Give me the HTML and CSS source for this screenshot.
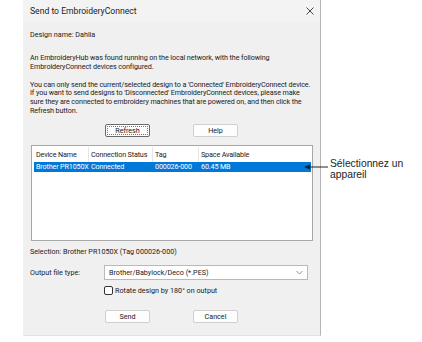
FILE: index.html
```html
<!DOCTYPE html>
<html lang="en">
<head>
    <meta charset="UTF-8">
    <title>Send to EmbroideryConnect</title>
    <link rel="stylesheet" href="styles.css">
</head>
<body>
    <div class="page">
        <div class="dialog">
            <div class="titlebar">
                <span>Send to EmbroideryConnect</span>
                <svg class="close" width="8" height="8" viewBox="0 0 8 8">
                    <path d="M0.5 0.5 L7.5 7.5 M7.5 0.5 L0.5 7.5" stroke="#333" stroke-width="0.9" fill="none"/>
                </svg>
            </div>
            <div class="content">
                <p class="design-name">Design name: Dahlia</p>
                <p class="para first">An EmbroideryHub was found running on the local network, with the following<br>EmbroideryConnect devices configured.</p>
                <p class="para second">You can only send the current/selected design to a 'Connected' EmbroideryConnect device.<br>If you want to send designs to 'Disconnected' EmbroideryConnect devices, please make<br>sure they are connected to embroidery machines that are powered on, and then click the<br>Refresh button.</p>

                <div class="btn-row top-row">
                    <button class="btn focused"><span>Refresh</span></button>
                    <button class="btn">Help</button>
                </div>

                <div class="device-list">
                    <div class="list-row list-head">
                        <span class="col c1">Device Name</span>
                        <span class="col c2">Connection Status</span>
                        <span class="col c3">Tag</span>
                        <span class="col c4">Space Available</span>
                    </div>
                    <div class="list-row selected">
                        <span class="col c1">Brother PR1050X</span>
                        <span class="col c2">Connected</span>
                        <span class="col c3">000026-000</span>
                        <span class="col c4">60.45 MB</span>
                    </div>
                </div>

                <p class="selection">Selection: Brother PR1050X (Tag 000026-000)</p>

                <div class="output-row">
                    <span class="label">Output file type:</span>
                    <div class="dropdown">
                        <span>Brother/Babylock/Deco (*.PES)</span>
                        <svg width="7" height="5" viewBox="0 0 7 5">
                            <path d="M0.5 1 L3.5 4 L6.5 1" stroke="#777" stroke-width="0.8" fill="none"/>
                        </svg>
                    </div>
                </div>

                <label class="check-row">
                    <span class="checkbox"></span>
                    <span>Rotate design by 180° on output</span>
                </label>

                <div class="btn-row bottom-row">
                    <button class="btn">Send</button>
                    <button class="btn">Cancel</button>
                </div>
            </div>
        </div>

        <div class="callout">
            <svg class="arrow" width="24" height="6" viewBox="0 0 24 6">
                <path d="M0 3 L6 0.5 L6 5.5 Z" fill="#222"/>
                <path d="M5 3 L24 3" stroke="#222" stroke-width="1"/>
            </svg>
            <span class="callout-text">Sélectionnez un<br>appareil</span>
        </div>
    </div>
</body>
</html>
```

FILE: styles.css
```css
* {
    margin: 0;
    padding: 0;
    box-sizing: border-box;
}
body {
    background: #fff;
    font-family: Roboto, 'Noto Sans', sans-serif;
    color: #1a1a1a;
}
.page {
    position: relative;
    width: 422px;
    height: 342px;
}
.dialog {
    margin-left: 23px;
    width: 298px;
    height: 336px;
    background: #f0f0f0;
    border-right: 1px solid #b5b5b5;
    border-bottom: 1px solid #e2e2e2;
}
.titlebar {
    height: 22px;
    display: flex;
    align-items: center;
    justify-content: space-between;
    padding: 0 6px 0 7px;
    background: #f3f3f3;
    font-size: 8.6px;
    color: #222;
}
.content {
    padding: 8px 7px 0 7px;
    font-size: 7.2px;
    line-height: 9px;
}
.design-name {
    height: 9px;
}
.para {
    line-height: 8.8px;
    white-space: nowrap;
    letter-spacing: -0.1px;
}
.para.first {
    margin-top: 15px;
}
.para.second {
    margin-top: 9px;
}
.btn-row {
    display: flex;
    gap: 43px;
    padding-left: 75px;
}
.top-row {
    margin-top: 8px;
}
.btn {
    width: 45px;
    height: 13px;
    font-family: inherit;
    font-size: 7.2px;
    color: #1a1a1a;
    background: #fdfdfd;
    border: 1px solid #d0d0d0;
    border-radius: 2px;
    display: flex;
    align-items: center;
    justify-content: center;
}
.btn.focused {
    border-color: #6a6a6a;
    padding: 1px;
}
.btn.focused span {
    display: flex;
    align-items: center;
    justify-content: center;
    width: 100%;
    height: 100%;
    border: 1px dotted #777;
}
.device-list {
    margin: 8px 0 0 1px;
    width: 282px;
    height: 96px;
    background: #fff;
    border: 1px solid #a8a8a8;
    padding: 1px 0 0 2px;
}
.list-row {
    display: flex;
    height: 15px;
    align-items: center;
}
.list-head .col {
    border-right: 1px solid #e5e5e5;
    height: 15px;
    line-height: 15px;
}
.list-row.selected {
    height: 10px;
    background: #0078d7;
    color: #fff;
    margin-right: 1px;
}
.col {
    padding-left: 2px;
    white-space: nowrap;
    overflow: hidden;
    letter-spacing: -0.15px;
}
.c1 { width: 55px; }
.c2 { width: 64px; }
.c3 { width: 46px; }
.c4 { flex: 1; border-right: none !important; }
.selection {
    margin-top: 6px;
    height: 9px;
}
.output-row {
    display: flex;
    align-items: center;
    margin-top: 9px;
}
.output-row .label {
    width: 74px;
}
.dropdown {
    width: 204px;
    height: 15px;
    background: #fff;
    border: 1px solid #b9b9b9;
    display: flex;
    align-items: center;
    justify-content: space-between;
    padding: 0 4px 0 4px;
}
.check-row {
    display: flex;
    align-items: center;
    gap: 2px;
    margin: 6px 0 0 74px;
    height: 9px;
}
.checkbox {
    width: 9px;
    height: 9px;
    border: 1px solid #333;
    border-radius: 2px;
    background: #fff;
}
.bottom-row {
    margin-top: 15px;
}
.callout {
    position: absolute;
    left: 304px;
    top: 158px;
    display: flex;
    align-items: flex-start;
}
.arrow {
    margin-top: 6px;
}
.callout-text {
    font-family: 'Liberation Sans', Arial, sans-serif;
    font-size: 10.3px;
    line-height: 11px;
    color: #222;
    margin-left: 2px;
}
```
